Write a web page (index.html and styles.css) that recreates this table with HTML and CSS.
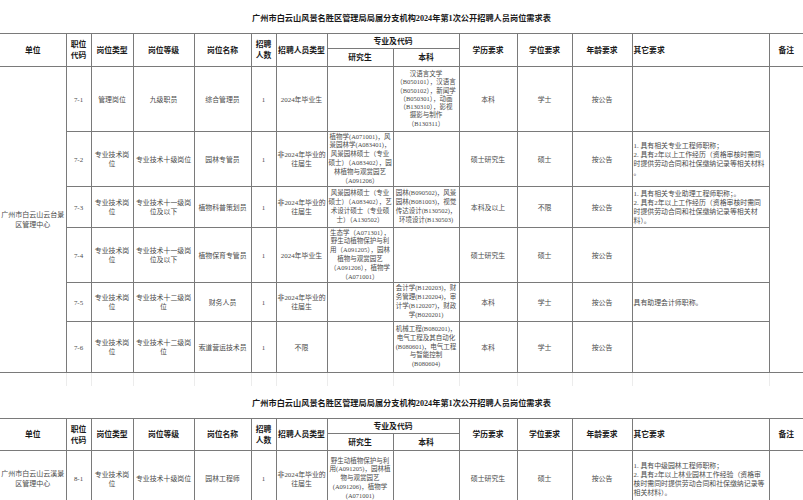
FILE: index.html
```html
<!DOCTYPE html>
<html lang="zh-CN">
<head>
<meta charset="utf-8">
<title>招聘人员岗位需求表</title>
<link rel="stylesheet" href="styles.css">
</head>
<body>
<div class="page">
  <div class="title">广州市白云山风景名胜区管理局局属分支机构2024年第1次公开招聘人员岗位需求表</div>
  <table class="sheet">
    <colgroup>
      <col class="w-unit"><col class="w-code"><col class="w-type"><col class="w-grade"><col class="w-name"><col class="w-num"><col class="w-ptype"><col class="w-grad"><col class="w-ug"><col class="w-edu"><col class="w-deg"><col class="w-age"><col class="w-other"><col class="w-note">
    </colgroup>
    <thead>
      <tr class="h1">
        <th rowspan="2" class="first">单位</th>
        <th rowspan="2">职位<br>代码</th>
        <th rowspan="2">岗位类型</th>
        <th rowspan="2">岗位等级</th>
        <th rowspan="2">岗位名称</th>
        <th rowspan="2">招聘<br>人数</th>
        <th rowspan="2">招聘人员类型</th>
        <th colspan="2">专业及代码</th>
        <th rowspan="2">学历要求</th>
        <th rowspan="2">学位要求</th>
        <th rowspan="2">年龄要求</th>
        <th rowspan="2" class="left">其它要求</th>
        <th rowspan="2" class="last">备注</th>
      </tr>
      <tr class="h2"><th>研究生</th><th>本科</th></tr>
    </thead>
    <tbody>
      <tr class="ra">
        <td rowspan="6" class="first unit">广州市白云山云台景<br>区管理中心</td>
        <td>7-1</td>
        <td>管理岗位</td>
        <td>九级职员</td>
        <td>综合管理员</td>
        <td>1</td>
        <td>2024年毕业生</td>
        <td class="sm"></td>
        <td class="sm tight">汉语言文学<br>（B050101），汉语言<br>（B050102），新闻学<br>（B050301），动画<br>（B130310），影视<br>摄影与制作<br>（B130311）</td>
        <td>本科</td>
        <td>学士</td>
        <td>按公告</td>
        <td class="req"></td>
        <td rowspan="6" class="last"></td>
      </tr>
      <tr class="rb">
        <td>7-2</td>
        <td>专业技术岗<br>位</td>
        <td>专业技术十级岗位</td>
        <td>园林专管员</td>
        <td>1</td>
        <td>非2024年毕业的<br>往届生</td>
        <td class="sm">植物学(A071001)，风<br>景园林学(A083401)，<br>风景园林硕士（专业<br>硕士）（A083402），园<br>林植物与观赏园艺<br>（A091206）</td>
        <td class="sm"></td>
        <td>硕士研究生</td>
        <td>硕士</td>
        <td>按公告</td>
        <td class="req">1. 具有相关专业工程师职称；<br>2. 具有2年以上工作经历（资格审核时需同<br>时提供劳动合同和社保缴纳记录等相关材料<br>。</td>
      </tr>
      <tr class="rc">
        <td>7-3</td>
        <td>专业技术岗<br>位</td>
        <td>专业技术十一级岗<br>位及以下</td>
        <td>植物科普策划员</td>
        <td>1</td>
        <td>非2024年毕业的<br>往届生</td>
        <td class="sm">风景园林硕士（专业<br>硕士）（A083402），艺<br>术设计硕士（专业硕<br>士）（A130502）</td>
        <td class="sm">园林(B090502)，风景<br>园林(B081003)，视觉<br>传达设计(B130502)，<br>环境设计(B130503)</td>
        <td>本科及以上</td>
        <td>不限</td>
        <td>按公告</td>
        <td class="req">1. 具有相关专业助理工程师职称；。<br>2. 具有2年以上工作经历（资格审核时需同<br>时提供劳动合同和社保缴纳记录等相关材<br>料）。</td>
      </tr>
      <tr class="rd">
        <td>7-4</td>
        <td>专业技术岗<br>位</td>
        <td>专业技术十一级岗<br>位及以下</td>
        <td>植物保育专管员</td>
        <td>1</td>
        <td>2024年毕业生</td>
        <td class="sm">生态学（A071301），<br>野生动植物保护与利<br>用（A091205），园林<br>植物与观赏园艺<br>（A091206），植物学<br>（A071001）</td>
        <td class="sm"></td>
        <td>硕士研究生</td>
        <td>硕士</td>
        <td>按公告</td>
        <td class="req"></td>
      </tr>
      <tr class="re">
        <td>7-5</td>
        <td>专业技术岗<br>位</td>
        <td>专业技术十二级岗<br>位</td>
        <td>财务人员</td>
        <td>1</td>
        <td>非2024年毕业的<br>往届生</td>
        <td class="sm"></td>
        <td class="sm">会计学(B120203)，财<br>务管理(B120204)，审<br>计学(B120207)，财政<br>学(B020201)</td>
        <td>本科</td>
        <td>学士</td>
        <td>按公告</td>
        <td class="req">具有助理会计师职称。</td>
      </tr>
      <tr class="rf">
        <td>7-6</td>
        <td>专业技术岗<br>位</td>
        <td>专业技术十二级岗<br>位</td>
        <td>索道营运技术员</td>
        <td>1</td>
        <td>不限</td>
        <td class="sm"></td>
        <td class="sm">机械工程(B080201)，<br>电气工程及其自动化<br>(B080601)，电气工程<br>与智能控制<br>(B080604)</td>
        <td>本科</td>
        <td>学士</td>
        <td>按公告</td>
        <td class="req"></td>
      </tr>
    </tbody>
  </table>

  <div class="gap">
    <span></span><span></span><span></span><span></span><span></span><span></span><span></span><span></span><span></span><span></span><span></span><span></span><span></span><span></span>
  </div>

  <div class="title second">广州市白云山风景名胜区管理局局属分支机构2024年第1次公开招聘人员岗位需求表</div>
  <table class="sheet">
    <colgroup>
      <col class="w-unit"><col class="w-code"><col class="w-type"><col class="w-grade"><col class="w-name"><col class="w-num"><col class="w-ptype"><col class="w-grad"><col class="w-ug"><col class="w-edu"><col class="w-deg"><col class="w-age"><col class="w-other"><col class="w-note">
    </colgroup>
    <thead>
      <tr class="h1">
        <th rowspan="2" class="first">单位</th>
        <th rowspan="2">职位<br>代码</th>
        <th rowspan="2">岗位类型</th>
        <th rowspan="2">岗位等级</th>
        <th rowspan="2">岗位名称</th>
        <th rowspan="2">招聘<br>人数</th>
        <th rowspan="2">招聘人员类型</th>
        <th colspan="2">专业及代码</th>
        <th rowspan="2">学历要求</th>
        <th rowspan="2">学位要求</th>
        <th rowspan="2">年龄要求</th>
        <th rowspan="2" class="left">其它要求</th>
        <th rowspan="2" class="last">备注</th>
      </tr>
      <tr class="h2 h2b"><th>研究生</th><th>本科</th></tr>
    </thead>
    <tbody>
      <tr class="rg">
        <td class="first unit">广州市白云山云溪景<br>区管理中心</td>
        <td>8-1</td>
        <td>专业技术岗<br>位</td>
        <td>专业技术十级岗位</td>
        <td>园林工程师</td>
        <td>1</td>
        <td>非2024年毕业的<br>往届生</td>
        <td class="sm">野生动植物保护与利<br>用(A091205)，园林植<br>物与观赏园艺<br>(A091206)，植物学<br>(A071001)</td>
        <td class="sm"></td>
        <td>硕士研究生</td>
        <td>硕士</td>
        <td>按公告</td>
        <td class="req">1. 具有中级园林工程师职称；<br>2. 具有2年以上林业园林工作经验（资格审<br>核时需同时提供劳动合同和社保缴纳记录等<br>相关材料）。</td>
        <td class="last"></td>
      </tr>
    </tbody>
  </table>
</div>
</body>
</html>
```

FILE: styles.css
```css
* { box-sizing: border-box; }
html, body { margin: 0; padding: 0; background: #fff; }
body {
  font-family: "Liberation Serif", "Noto Sans CJK SC", serif;
  color: #4a4a4a;
  width: 803px;
  overflow: hidden;
}
.page { width: 803px; overflow: hidden; }

.title {
  height: 33px;
  display: flex;
  align-items: center;
  justify-content: center;
  font-weight: bold;
  font-size: 8.2px;
  color: #1a1a1a;
}
.title.second { height: 32px; }

.sheet {
  border-collapse: collapse;
  table-layout: fixed;
  width: 803px;
}
.w-unit { width: 66px; }
.w-code { width: 25px; }
.w-type { width: 42px; }
.w-grade { width: 61px; }
.w-name { width: 57px; }
.w-num { width: 25px; }
.w-ptype { width: 51px; }
.w-grad { width: 66px; }
.w-ug { width: 66px; }
.w-edu { width: 58px; }
.w-deg { width: 55px; }
.w-age { width: 60px; }
.w-other { width: 137px; }
.w-note { width: 34px; }

.sheet th, .sheet td {
  border: 1px solid #7a7a7a;
  padding: 0 1px;
  text-align: center;
  vertical-align: middle;
  overflow: hidden;
}
.sheet th {
  font-weight: bold;
  font-size: 7.8px;
  line-height: 11px;
  color: #1a1a1a;
}
.sheet td {
  font-size: 6.9px;
  line-height: 9px;
  white-space: nowrap;
}
.sheet .first { border-left: none; }
.sheet .last { border-right: none; }
.sheet th.left { text-align: left; }

.sheet td.unit { line-height: 10px; font-size: 7px; }
.sheet td.sm { font-size: 6.5px; line-height: 8.8px; }
.sheet td.tight { line-height: 8.2px; }
.sheet td.req { text-align: left; font-size: 6.9px; line-height: 9px; }

.h1 { height: 15px; }
.h2 { height: 18px; }
.h2b { height: 17px; }
.ra { height: 65px; }
.rb { height: 55px; }
.rc { height: 41px; }
.rd { height: 55px; }
.re { height: 39px; }
.rf { height: 51px; }
.rg { height: 56px; }

.gap {
  height: 13px;
  display: grid;
  grid-template-columns: 66px 25px 42px 61px 57px 25px 51px 66px 66px 58px 55px 60px 137px 34px;
}
.gap span { border-left: 1px solid #ececec; }
.gap span:first-child { border-left: none; }
```
